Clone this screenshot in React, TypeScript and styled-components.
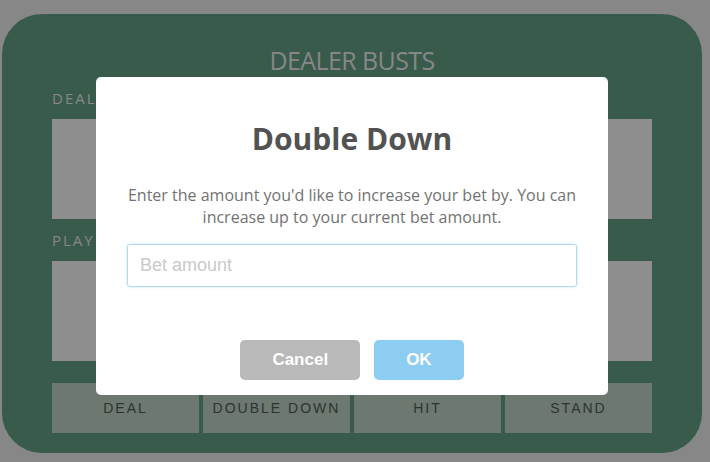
import React from "react";
import styled, { createGlobalStyle } from "styled-components";

const GlobalStyle = createGlobalStyle`
  html, body {
    margin: 0;
    padding: 0;
    background: #878787;
  }
  * { box-sizing: border-box; }
`;

const Page = styled.div`
  width: 710px;
  height: 462px;
  padding: 14px 8px 9px 2px;
  position: relative;
  overflow: hidden;
`;

const Table = styled.div`
  width: 700px;
  height: 439px;
  background: #395b4b;
  border-radius: 40px;
  padding: 29px 50px 20px;
  display: flex;
  flex-direction: column;
  font-family: "Open Sans", "Liberation Sans", sans-serif;
`;

const Status = styled.div`
  font-size: 25px;
  line-height: 34px;
  color: #878787;
  text-align: center;
  letter-spacing: -0.6px;
  margin-bottom: 11px;
`;

const Label = styled.div<{ $top?: number }>`
  font-size: 15px;
  line-height: 20px;
  color: #888888;
  letter-spacing: 2px;
  margin-top: ${(p) => p.$top ?? 0}px;
  margin-bottom: 11px;
`;

const Slot = styled.div`
  height: 100px;
  background: #8e8e8e;
`;

const ActionBar = styled.div`
  display: grid;
  grid-template-columns: repeat(4, 1fr);
  gap: 4px;
  margin-top: 22px;
  height: 50px;
`;

const ActionButton = styled.button`
  border: none;
  background: #6c7870;
  color: #2d3430;
  font-family: "Liberation Sans", Arial, sans-serif;
  font-size: 14px;
  letter-spacing: 2px;
  padding: 0;
  display: flex;
  align-items: center;
  justify-content: center;
`;

const Overlay = styled.div`
  position: fixed;
  inset: 0;
`;

const Dialog = styled.div`
  position: absolute;
  left: 96px;
  top: 77px;
  width: 512px;
  height: 318px;
  padding: 17px 17px 15px;
  background: #ffffff;
  border-radius: 5px;
  text-align: center;
  font-family: "Open Sans", "Liberation Sans", sans-serif;
  display: flex;
  flex-direction: column;
`;

const Title = styled.h2`
  margin: 25px 0;
  font-size: 30px;
  line-height: 40px;
  font-weight: 700;
  color: #525252;
`;

const Text = styled.p`
  margin: 0;
  font-size: 16px;
  line-height: 22px;
  color: #727272;
  font-weight: 400;
`;

const Field = styled.div`
  padding: 16px 14px 0;
`;

const Input = styled.input`
  display: block;
  width: 100%;
  height: 43px;
  border: 1px solid #b4dbed;
  border-radius: 3px;
  box-shadow: 0 0 3px #c4e6f5;
  padding: 0 12px;
  font-family: "Liberation Sans", Arial, sans-serif;
  font-size: 18px;
  color: #555;
  outline: none;
  &::placeholder {
    color: #c9c9c9;
  }
`;

const ButtonRow = styled.div`
  margin-top: 53px;
  display: flex;
  justify-content: center;
  gap: 14px;
`;

const DialogButton = styled.button<{ $variant: "cancel" | "ok" }>`
  height: 40px;
  padding: 0 32px;
  border: none;
  border-radius: 5px;
  background: ${(p) => (p.$variant === "cancel" ? "#b9b9b9" : "#8ccdf1")};
  color: #ffffff;
  font-family: "Liberation Sans", Arial, sans-serif;
  font-size: 17px;
  font-weight: 700;
`;

export default function App() {
  return (
    <>
      <GlobalStyle />
      <Page>
        <Table>
          <Status>DEALER BUSTS</Status>
          <Label>DEALER</Label>
          <Slot />
          <Label $top={11}>PLAYER</Label>
          <Slot />
          <ActionBar>
            <ActionButton>DEAL</ActionButton>
            <ActionButton>DOUBLE DOWN</ActionButton>
            <ActionButton>HIT</ActionButton>
            <ActionButton>STAND</ActionButton>
          </ActionBar>
        </Table>
        <Overlay>
          <Dialog>
            <Title>Double Down</Title>
            <Text>
              Enter the amount you'd like to increase your bet by. You can
              increase up to your current bet amount.
            </Text>
            <Field>
              <Input placeholder="Bet amount" />
            </Field>
            <ButtonRow>
              <DialogButton $variant="cancel">Cancel</DialogButton>
              <DialogButton $variant="ok">OK</DialogButton>
            </ButtonRow>
          </Dialog>
        </Overlay>
      </Page>
    </>
  );
}
